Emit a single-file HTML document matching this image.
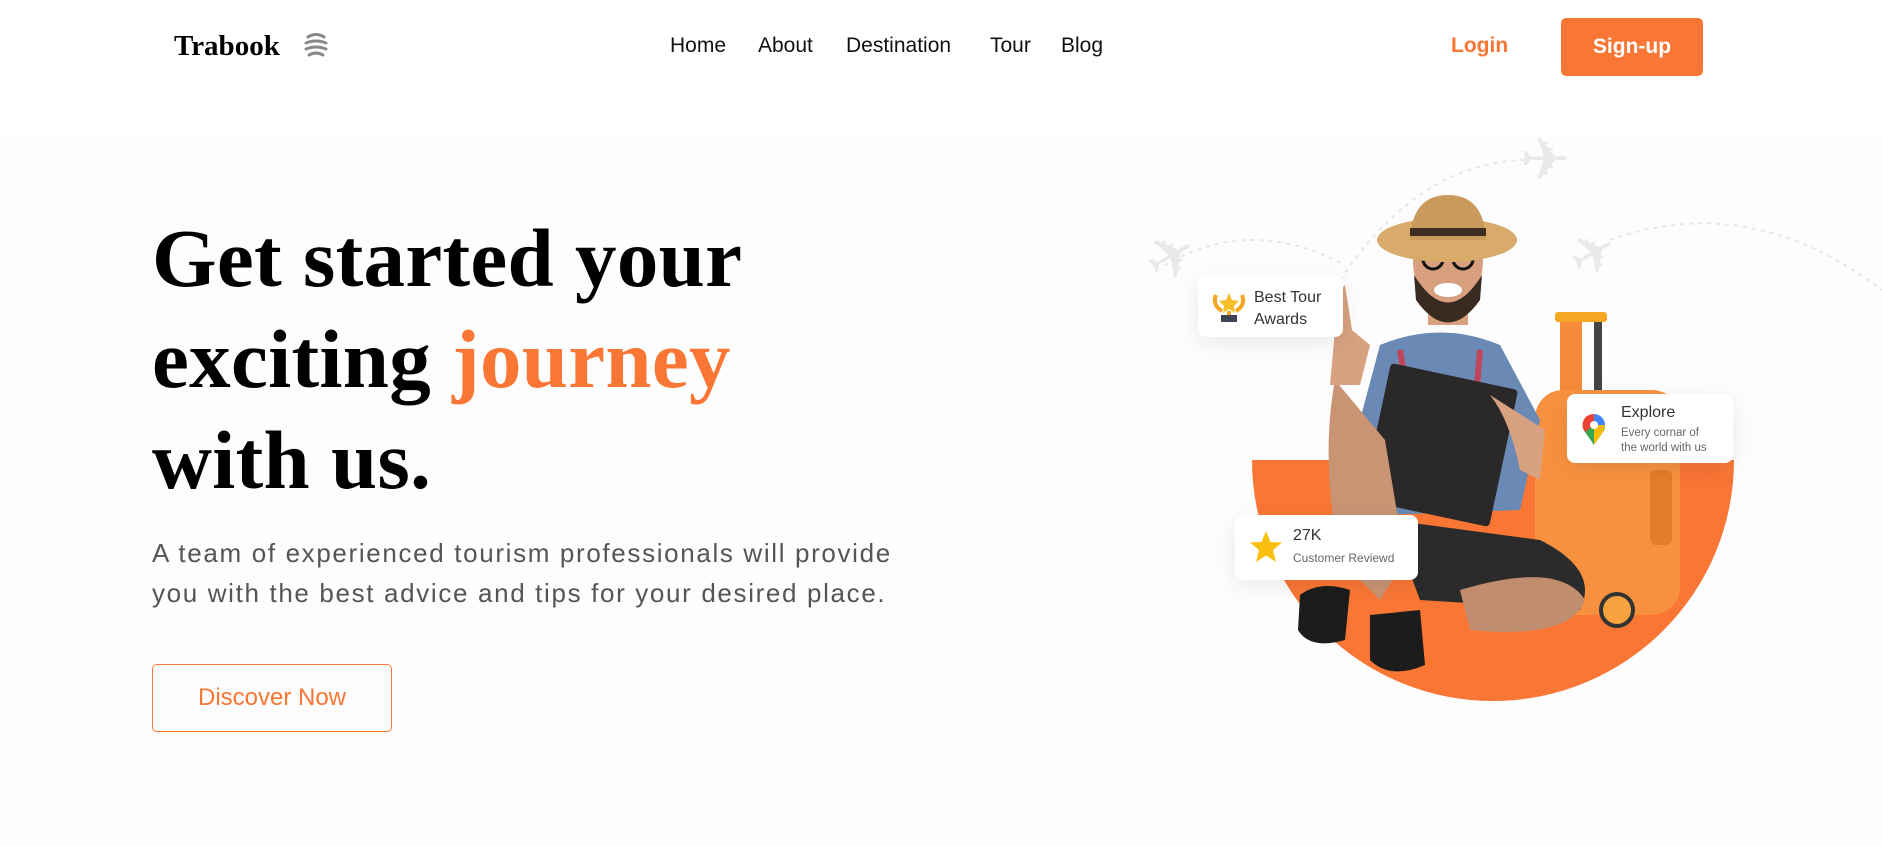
<!DOCTYPE html>
<html><head><meta charset="utf-8">
<style>
*{margin:0;padding:0;box-sizing:border-box}
body{width:1882px;height:846px;overflow:hidden;background:#fff;font-family:"Liberation Sans",sans-serif;position:relative}
.abs{position:absolute}
.nav a{position:absolute;top:34px;font-size:21px;color:#111;text-decoration:none;white-space:nowrap}
h1{position:absolute;left:152px;top:208px;font-family:"Liberation Serif",serif;font-weight:bold;font-size:83px;line-height:101px;color:#000;white-space:nowrap;letter-spacing:0.3px}
h1 span{color:#f97635}
.p{position:absolute;left:152px;top:533px;font-size:26px;letter-spacing:1.65px;line-height:40px;color:#555;white-space:nowrap}
.btn{position:absolute;left:152px;top:664px;width:240px;height:68px;border:1.5px solid #f97635;border-radius:5px;color:#f97635;font-size:24px;display:flex;align-items:center;justify-content:center}
.card{position:absolute;background:#fff;border-radius:8px;box-shadow:0 6px 24px rgba(0,0,0,0.08);color:#333}
</style></head><body>
<div class="abs" style="left:0;top:140px;width:1882px;height:706px;background:#fdfdfd"></div>
<div class="abs" style="left:174px;top:30px;font-family:'Liberation Serif',serif;font-weight:bold;font-size:29px;color:#000">Trabook</div>
<svg class="abs" style="left:302px;top:31px" width="28" height="28" viewBox="0 0 28 28"><g fill="none" stroke="#888" stroke-width="3" stroke-linecap="round"><path d="M6 6 Q14 1 22 6"/><path d="M4 12 Q14 8 24 12"/><path d="M4 18 Q14 14 24 18"/><path d="M7 24 Q14 20 21 24"/></g></svg>
<div class="nav">
<a style="left:670px">Home</a><a style="left:758px">About</a><a style="left:846px">Destination</a><a style="left:990px">Tour</a><a style="left:1061px">Blog</a>
<a style="left:1451px;color:#f97635;font-weight:bold;font-size:21px">Login</a>
</div>
<div class="abs" style="left:1561px;top:18px;width:142px;height:58px;background:#f97635;border-radius:5px;color:#fff;font-weight:bold;font-size:21px;display:flex;align-items:center;justify-content:center">Sign-up</div>

<h1>Get started your<br>exciting <span>journey</span><br>with us.</h1>
<div class="p">A team of experienced tourism professionals will provide<br>you with the best advice and tips for your desired place.</div>
<div class="btn">Discover Now</div>

<svg class="abs" style="left:1100px;top:120px" width="782" height="620" viewBox="1100 120 782 620">
<g fill="none" stroke="#e6e6e6" stroke-width="2" stroke-dasharray="4 5">
<path d="M1165 265 Q1250 215 1345 265"/>
<path d="M1340 280 Q1420 160 1530 160"/>
<path d="M1610 240 Q1750 190 1882 290"/>
</g>
<g fill="#e9e9e9">
<text x="1150" y="290" font-size="60" transform="rotate(-30 1150 270)">✈</text>
<text x="1520" y="180" font-size="60">✈</text>
<text x="1570" y="275" font-size="56" transform="rotate(-30 1590 255)">✈</text>
</g>
<path d="M1252 460 H1734 A241 241 0 0 1 1252 460 Z" fill="#f97635"/>
<rect x="1560" y="318" width="22" height="80" rx="4" fill="#f58a3c"/>
<rect x="1594" y="318" width="8" height="80" fill="#444"/>
<rect x="1555" y="312" width="52" height="10" rx="3" fill="#f5a623"/>
<rect x="1535" y="390" width="145" height="225" rx="28" fill="#f7913f"/>
<rect x="1650" y="470" width="22" height="75" rx="6" fill="#e57c2a"/>
<circle cx="1617" cy="610" r="16" fill="#f7a23f" stroke="#333" stroke-width="4"/>
<path d="M1380 345 Q1440 320 1500 345 L1540 420 L1520 510 L1380 515 L1360 420 Z" fill="#6a89b5"/>
<path d="M1400 350 L1420 470 M1480 350 L1470 470" stroke="#c0455a" stroke-width="6"/>
<rect x="1375" y="375" width="130" height="140" rx="4" fill="#2a2828" transform="rotate(12 1440 445)"/>
<path d="M1335 380 Q1320 460 1340 560 L1380 600 L1405 560 L1385 440 Z" fill="#c99474"/>
<path d="M1390 520 L1540 540 Q1600 570 1580 610 L1420 600 Z" fill="#2b2b2b"/>
<path d="M1460 590 Q1560 560 1585 600 Q1570 640 1470 630 Z" fill="#c08e6e"/>
<path d="M1300 595 Q1320 580 1350 590 L1345 640 Q1310 650 1298 630 Z" fill="#1c1c1c"/>
<path d="M1370 615 L1420 610 L1425 665 Q1390 680 1370 660 Z" fill="#1c1c1c"/>
<path d="M1335 330 Q1330 300 1345 285 L1352 330 L1370 345 L1360 385 L1330 385 Z" fill="#d8a17f"/>
<path d="M1490 395 Q1510 420 1520 470 L1540 480 L1545 430 Z" fill="#d8a17f"/>
<rect x="1428" y="285" width="40" height="40" fill="#d9a07f"/>
<ellipse cx="1448" cy="262" rx="35" ry="42" fill="#d9a07f"/>
<path d="M1414 275 Q1448 330 1482 275 L1480 300 Q1448 345 1416 300 Z" fill="#3a2b22"/>
<ellipse cx="1448" cy="290" rx="14" ry="7" fill="#fff"/>
<circle cx="1433" cy="259" r="10" fill="none" stroke="#111" stroke-width="3"/>
<circle cx="1463" cy="259" r="10" fill="none" stroke="#111" stroke-width="3"/>
<ellipse cx="1447" cy="240" rx="70" ry="22" fill="#d9ab6b"/>
<path d="M1410 240 Q1412 195 1448 195 Q1484 195 1486 240 Z" fill="#c99a5c"/>
<rect x="1410" y="228" width="76" height="8" fill="#3b2d22"/>
</svg>

<div class="card" style="left:1198px;top:275px;width:145px;height:62px">
<svg class="abs" style="left:14px;top:16px" width="34" height="32" viewBox="0 0 34 32"><path d="M4 4 Q0 14 10 20 M30 4 Q34 14 24 20" stroke="#f5a623" stroke-width="4" fill="none"/><polygon points="17,2 20,9 27,10 22,15 23,22 17,18 11,22 12,15 7,10 14,9" fill="#f7c02b"/><rect x="15" y="20" width="4" height="5" fill="#f5a623"/><rect x="9" y="24" width="16" height="7" fill="#3d4554"/></svg>
<div class="abs" style="left:56px;top:12px;font-size:16px;line-height:22px">Best Tour<br>Awards</div>
</div>
<div class="card" style="left:1567px;top:394px;width:166px;height:69px">
<svg class="abs" style="left:14px;top:18px" width="26" height="34" viewBox="0 0 26 34"><path d="M13 33 L4 20 A11 11 0 1 1 22 20 Z" fill="#34a853"/><path d="M4 20 A11 11 0 0 1 13 2 L13 13 Z" fill="#ea4335"/><path d="M13 2 A11 11 0 0 1 24 13 L13 13 Z" fill="#4285f4"/><path d="M22 20 L13 33 L13 13 L24 13 Z" fill="#fbbc04"/><circle cx="13" cy="13" r="4" fill="#fff"/></svg>
<div class="abs" style="left:54px;top:10px;font-size:16px;color:#333">Explore</div>
<div class="abs" style="left:54px;top:32px;font-size:11.5px;line-height:15px;color:#666">Every cornar of<br>the world with us</div>
</div>
<div class="card" style="left:1235px;top:515px;width:183px;height:65px">
<svg class="abs" style="left:14px;top:15px" width="34" height="34" viewBox="0 0 34 34"><polygon points="17,1 21.5,12 33,12.5 24,20 27,32 17,25.5 7,32 10,20 1,12.5 12.5,12" fill="#fbbf10"/></svg>
<div class="abs" style="left:58px;top:12px;font-size:16px;color:#333">27K</div>
<div class="abs" style="left:58px;top:36px;font-size:12px;color:#666">Customer Reviewd</div>
</div>
</body></html>
